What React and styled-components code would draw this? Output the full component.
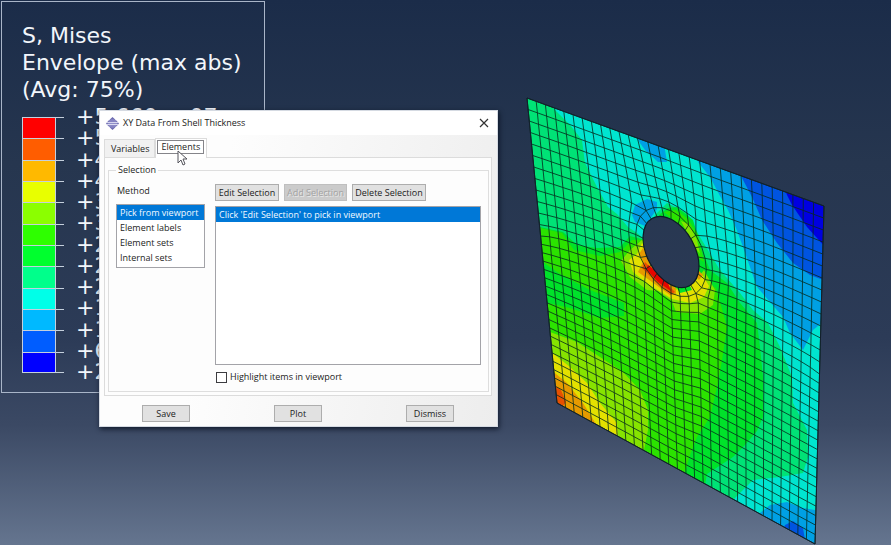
import React, { useState } from 'react';
import styled, { createGlobalStyle } from 'styled-components';

const GlobalStyle = createGlobalStyle`
  * {
    box-sizing: border-box;
  }

  body {
    margin: 0;
    font-family: 'Open Sans', 'Noto Sans', sans-serif;
  }
`;

const Viewport = styled.main`
  position: relative;
  display: flex;
  justify-content: space-between;
  min-height: 100vh;
  padding-right: 61px;
  overflow: hidden;
  background: linear-gradient(#1b2c49 0%, #26364f 30%, #2c3b57 62%, #3b4964 78%, #65758f 100%);
`;

const LegendBox = styled.section`
  align-self: flex-start;
  width: 264px;
  margin: 1px 0 0 1px;
  padding: 20px 20px 19px;
  border: 1px solid #a9b5c8;
  color: #f2f6fb;
  font-family: 'DejaVu Sans', sans-serif;
  font-size: 22px;
`;

const LegendTitle = styled.h1`
  margin: 0 0 14px;
  font-size: 22px;
  font-weight: 400;
  line-height: 27px;
  white-space: nowrap;
`;

const Scale = styled.div`
  display: flex;
`;

const ColorBar = styled.div`
  display: grid;
  grid-template-rows: repeat(12, 1fr);
  width: 42px;
  height: 256px;
`;

const Swatch = styled.div`
  position: relative;
  border-top: 1px solid #c5d0dd;

  &::before {
    content: '';
    display: block;
    width: 32px;
    height: 100%;
    background: ${({ $color }) => $color};
    border: solid #c5d0dd;
    border-width: 0 1px;
  }

  &:last-child {
    border-bottom: 1px solid #c5d0dd;
  }
`;

const ScaleLabels = styled.ol`
  display: flex;
  flex-direction: column;
  justify-content: space-between;
  height: 275px;
  margin: -10px 0 -9px 12px;
  padding: 0;
  list-style: none;
  line-height: 20px;
`;

const Plot = styled.svg`
  flex: none;
  align-self: flex-end;
  width: 310px;
  height: 455px;
`;

const Dialog = styled.form`
  position: absolute;
  top: 110px;
  left: 99px;
  width: 399px;
  padding: 0 5px 4px 4px;
  border: 1px solid #d5dae2;
  background: linear-gradient(100deg, #fdfdfd 30%, #ededed);
  color: #1c1c22;
  font-size: 9px;
  line-height: 14px;
  box-shadow: 1px 2px 5px rgba(5, 12, 28, 0.8);
`;

const TitleBar = styled.header`
  display: flex;
  align-items: center;
  gap: 4px;
  height: 24px;
  margin: 0 -5px 0 -4px;
  padding: 0 6px 0 6px;
  background: #fff;
`;

const Title = styled.h2`
  flex: 1;
  margin: 0;
  font-size: 9px;
  font-weight: 400;
`;

const CloseButton = styled.button`
  display: flex;
  padding: 2px;
  border: 0;
  background: none;
`;

const Tabs = styled.div`
  display: flex;
  align-items: flex-end;
  padding-top: 3px;
`;

const Tab = styled.button`
  height: ${({ $active }) => ($active ? 20 : 18)}px;
  margin-bottom: ${({ $active }) => ($active ? -1 : 0)}px;
  padding: ${({ $active }) => ($active ? '0 2px 3px 1px' : '1px 1px 1px 2px')};
  border: 1px solid #dcdcdc;
  border-bottom: 0;
  background: ${({ $active }) => ($active ? '#fff' : '#f1f1f1')};
  color: inherit;
  font: inherit;

  span {
    display: block;
    padding: 0 3px;
    border: 1px solid ${({ $active }) => ($active ? '#85858a' : 'transparent')};
    line-height: 12px;
  }
`;

const Panel = styled.div`
  padding: 5px 2px 3px 3px;
  border: 1px solid #dcdcdc;
  background: #fdfdfd;
`;

const Group = styled.fieldset`
  display: flex;
  gap: 10px;
  min-width: 0;
  margin: 0;
  padding: 4px 7px 7px;
  border: 1px solid #dedede;

  legend {
    padding: 0 2px;
  }
`;

const Column = styled.div`
  flex: ${({ $grow }) => ($grow ? '1' : '0 0 89px')};
  min-width: 0;
`;

const MethodLabel = styled.label`
  display: block;
  margin-bottom: 4px;
  padding: 2px 1px 1px;
  line-height: 16px;
`;

const ListBox = styled.select`
  display: block;
  width: 100%;
  height: ${({ $height }) => $height}px;
  padding: 0;
  overflow: hidden;
  border: 1px solid #a3a3a8;
  border-radius: 0;
  outline: 0;
  background: #fff;
  font: 9px/14px 'Open Sans', 'Noto Sans', sans-serif;

  option {
    min-height: 0;
    padding: 1px 3px;
    -webkit-text-fill-color: #1c1c22;
  }

  option:checked {
    background: linear-gradient(#0078d7, #0078d7);
    -webkit-text-fill-color: #f2f8ff;
  }
`;

const ButtonRow = styled.div`
  display: flex;
  gap: 5px;
  margin: 3px 0 5px;
`;

const Button = styled.button`
  width: ${({ $width }) => $width}px;
  height: 17px;
  padding: 0;
  border: 1px solid #adadad;
  background: #e1e1e1;
  color: inherit;
  font: inherit;
  white-space: nowrap;

  &:disabled {
    border-color: #bfbfbf;
    background: #cbcbcb;
    color: #a3a3a3;
    text-shadow: 1px 1px 0 #e9e9e9;
  }
`;

const CheckLabel = styled.label`
  display: flex;
  align-items: center;
  gap: 3px;
  margin-top: 5px;
  padding-left: 1px;
`;

const Checkbox = styled.input`
  appearance: none;
  width: 11px;
  height: 11px;
  margin: 0;
  border: 1px solid #3c3c40;
  background: #fff;

  &:checked {
    background: #0078d7;
  }
`;

const Footer = styled.footer`
  display: flex;
  justify-content: space-between;
  padding: 9px 38px 0;
`;

const Pointer = styled.svg`
  position: absolute;
  top: 150px;
  left: 177px;
  width: 12px;
  height: 17px;
`;

const legendColors = [
  '#ff0000', '#ff5d00', '#ffb900', '#e8ff00', '#8bff00', '#2eff00',
  '#00ff2e', '#00ff8b', '#00ffe8', '#00b9ff', '#005dff', '#0000ff',
];

const legendValues = [
  '+5.660e+07', '+5.205e+07', '+4.750e+07', '+4.294e+07', '+3.839e+07',
  '+3.384e+07', '+2.929e+07', '+2.474e+07', '+2.019e+07', '+1.563e+07',
  '+1.108e+07', '+6.531e+06', '+2.000e+06',
];

const methods = ['Pick from viewport', 'Element labels', 'Element sets', 'Internal sets'];

// Plate corners and the hole, in viewport units
const OUTLINE = '527,98 824,206 815,544 557,403';
const COLS = 30;
const ROWS = 32;
const RING = { left: 11, right: 17, top: 6, bottom: 12 };
const SEAM = 14;

const lerp = (a, b, t) => a + (b - a) * t;

const holePoint = (a, b, scale) => [
  671 + 28 * a * scale,
  252 + (13.9 * a + 32.7 * b) * scale,
];

// maps the square block of elements round the hole onto the ellipse
const ringPoint = (i, j, scale) => {
  const p = (i - SEAM) / 3;
  const q = (j - 9) / 3;
  if (Math.abs(p) >= Math.abs(q)) {
    const t = (q / Math.abs(p)) * Math.PI / 4;
    return holePoint(Math.sign(p) * Math.cos(t), Math.sin(t), scale);
  }
  const t = (p / Math.abs(q)) * Math.PI / 4;
  return holePoint(Math.sin(t), Math.sign(q) * Math.cos(t), scale);
};

const inHole = (i, j) => i > RING.left && i < RING.right && j > RING.top && j < RING.bottom;
const onRing = (i, j) =>
  i >= RING.left && i <= RING.right && j >= RING.top && j <= RING.bottom && !inHole(i, j);

// x runs a bit denser on the left of the top edge, y denser on the lower left
const topX = (i) => (i <= 12 ? 527 + i * 9.2 : 637.4 + ((i - 12) * 186.6) / 18);
const leftY = (j) => (j <= 12 ? 98 + j * 11.5 : 236 + (j - 12) * 8.35);
const rightY = (j) => (j <= 14 ? 206 + j * 12 : 374 + ((j - 14) * 170) / 18);

const buildMesh = () => {
  const nodes = [];
  const fixed = [];
  for (let j = 0; j <= ROWS; j++) {
    nodes.push([]);
    fixed.push([]);
    for (let i = 0; i <= COLS; i++) {
      const u = i / COLS;
      const tx = topX(i);
      const ty = lerp(98, 206, (tx - 527) / 297);
      const v = lerp((leftY(j) - 98) / 305, (rightY(j) - 206) / 338, u);
      let point = [lerp(tx, lerp(557, 815, u), v), lerp(ty, lerp(403, 544, u), v)];
      let lock = i === 0 || j === 0 || i === COLS || j === ROWS;
      const t = (j - RING.bottom) / (ROWS - RING.bottom);
      if (onRing(i, j)) {
        point = ringPoint(i, j, 1.26);
        lock = true;
      } else if (i === SEAM && t > 0) {
        point = [lerp(671, 677.4, t), lerp(293.2, 468.8, t)];
        lock = true;
      } else if (i === RING.right && t > 0) {
        point = [lerp(698, 703.2, t), lerp(293.5, 482.9, t)];
        lock = true;
      }
      nodes[j].push(point);
      fixed[j].push(lock);
    }
  }
  for (let n = 0; n < 400; n++) {
    for (let j = 1; j < ROWS; j++) {
      for (let i = 1; i < COLS; i++) {
        if (fixed[j][i] || inHole(i, j)) continue;
        nodes[j][i] = [0, 1].map(
          (k) => (nodes[j - 1][i][k] + nodes[j + 1][i][k] + nodes[j][i - 1][k] + nodes[j][i + 1][k]) / 4
        );
      }
    }
  }
  return nodes;
};

const meshPath = () => {
  const nodes = buildMesh();
  const parts = [];
  const segment = (a, b) =>
    parts.push(`M${a[0].toFixed(1)} ${a[1].toFixed(1)}L${b[0].toFixed(1)} ${b[1].toFixed(1)}`);
  for (let j = 0; j <= ROWS; j++) {
    for (let i = 0; i <= COLS; i++) {
      if (inHole(i, j)) continue;
      if (i < COLS && !inHole(i + 1, j)) segment(nodes[j][i], nodes[j][i + 1]);
      if (j < ROWS && !inHole(i, j + 1)) segment(nodes[j][i], nodes[j + 1][i]);
      if (onRing(i, j)) segment(nodes[j][i], ringPoint(i, j, 1));
    }
  }
  return parts.join('');
};

const MESH = meshPath();

const bands = [
  // cyan
  ['#00e5d0', '553,100 553,108 570,125 582,140 585,163 597,187 608,207 617,214 628,227 637,233 645,240 655,215 667,203 687,213 700,237 712,257 720,270 740,293 753,310 768,323 780,347 792,377 793,403 807,430 808,457 803,473 780,477 753,480 733,500 733,550 830,550 830,190'],
  // light blue
  ['#00a0e4', '697,155 698,162 710,177 720,196 728,210 736,228 743,247 757,287 770,302 783,317 790,333 803,350 813,330 823,322 830,200'],
  ['#00a0e4', '637,130 637,139 645,150 658,162 667,162 665,150 662,140'],
  ['#00a0e4', '632,215 635,205 647,199 657,202 657,209 645,226 635,222'],
  ['#00a0e4', '758,520 760,513 770,505 787,502 803,508 815,510 820,548'],
  // blue
  ['#0054e0', '740,170 742,178 752,197 762,220 777,243 793,263 810,275 826,281 830,200'],
  ['#0054e0', '783,530 785,525 793,521 803,528 805,540'],
  ['#0000e0', '783,185 787,195 792,205 807,227 826,248 830,200'],
  // greens
  ['#00e22a', '540,227 563,232 577,245 597,248 620,247 630,236 645,240 660,214 668,208 677,207 693,220 702,250 710,270 727,283 740,303 757,323 760,347 763,377 763,417 757,431 745,445 733,457 707,474 704,490 550,420'],
  ['#2be300', '540,228 562,233 574,250 600,256 620,252 632,240 646,240 672,293 700,280 716,288 727,327 722,360 718,383 710,417 697,437 690,455 684,475 550,430 548,303 570,308 600,318 624,316 624,303 590,290 560,274 540,260'],
  ['#2be300', '664,212 676,210 688,219 698,235 704,262 698,258 686,230'],
  // yellow green
  ['#86e300', '550,332 577,342 600,357 623,372 640,390 648,410 648,430 643,455 550,420'],
  ['#86e300', '642,240 630,250 621,261 630,277 647,290 658,291 672,301 676,312 700,314 713,305 715,290 704,270 690,288 670,288'],
  ['#86e300', '681,221 689,224 697,240 700,254 694,246'],
  // yellow
  ['#e3e000', '550,351 570,367 587,383 600,403 617,423 618,440 550,420'],
  ['#e3e000', '642,243 637,254 629,260 633,272 648,284 672,299 690,303 704,297 709,286 703,276 697,270 690,286 675,290'],
  ['#00e22a', '675,285 689,284 692,290 680,293'],
  // orange and red
  ['#e69a00', '550,369 567,383 583,403 596,424 550,420'],
  ['#e69a00', '643,248 639,254 643,262 638,272 652,282 670,295 676,295 676,288 660,275'],
  ['#e69a00', '699,271 703,275 699,280 695,276'],
  ['#e65000', '550,382 561,390 566,402 560,410 550,405'],
  ['#e65000', '645,262 642,268 655,281 671,294 675,292'],
  ['#e60500', '648,265 646,269 658,282 671,291 668,283 655,270'],
];

const StressPlot = () => (
  <Plot viewBox="520 90 310 455" role="img" aria-label="Mises stress contour on plate with hole">
    <defs>
      <mask id="plate">
        <polygon points={OUTLINE} fill="#fff" />
        <ellipse cx="671" cy="252" rx="23.8" ry="38.5" transform="rotate(-29 671 252)" fill="#000" />
      </mask>
    </defs>
    <g mask="url(#plate)">
      <polygon points={OUTLINE} fill="#00e276" />
      {bands.map(([color, points]) => (
        <polygon key={points} points={points} fill={color} />
      ))}
    </g>
    <path d={MESH} fill="none" stroke="#062a1c" strokeWidth="0.9" strokeOpacity="0.9" />
    <polygon points={OUTLINE} fill="none" stroke="#14202c" strokeWidth="1" />
    <ellipse
      cx="671"
      cy="252"
      rx="23.8"
      ry="38.5"
      transform="rotate(-29 671 252)"
      fill="none"
      stroke="#0c1a24"
      strokeWidth="1.2"
    />
  </Plot>
);

const ContourLegend = () => (
  <LegendBox>
    <LegendTitle>
      S, Mises<br />
      Envelope (max abs)<br />
      (Avg: 75%)
    </LegendTitle>
    <Scale>
      <ColorBar>
        {legendColors.map(color => (
          <Swatch key={color} $color={color} />
        ))}
      </ColorBar>
      <ScaleLabels>
        {legendValues.map(value => (
          <li key={value}>{value}</li>
        ))}
      </ScaleLabels>
    </Scale>
  </LegendBox>
);

const AppIcon = () => (
  <svg width="13" height="13" viewBox="0 0 12 12" aria-hidden="true">
    <path d="M3.5 2.2 6 0l2.5 2.2v1.3h1.3L12 6 9.800 8.500H8.500v1.300L6 12 3.500 9.800V8.500H2.200L0 6l2.200-2.500h1.300z" fill="#6d6bb0" />
    <circle cx="6" cy="6" r="4.200" fill="#8583c2" />
    <path d="M1 5.200h10M1 7h10" stroke="#e4e4f6" strokeWidth="0.9" />
  </svg>
);

const App = () => {
  const [tab, setTab] = useState('Elements');
  const [method, setMethod] = useState(methods[0]);
  const [highlight, setHighlight] = useState(false);

  return (
    <>
      <GlobalStyle />
      <Viewport>
        <ContourLegend />
        <StressPlot />
        <Dialog onSubmit={(e) => e.preventDefault()}>
          <TitleBar>
            <AppIcon />
            <Title>XY Data From Shell Thickness</Title>
            <CloseButton type="button" aria-label="Close">
              <svg width="10" height="10" viewBox="0 0 10 10">
                <path d="M1 1l8 8M9 1l-8 8" stroke="#333" strokeWidth="1.2" />
              </svg>
            </CloseButton>
          </TitleBar>
          <Tabs role="tablist">
            {['Variables', 'Elements'].map(name => (
              <Tab
                key={name}
                type="button"
                role="tab"
                aria-selected={tab === name}
                $active={tab === name}
                onClick={() => setTab(name)}
              >
                <span>{name}</span>
              </Tab>
            ))}
          </Tabs>
          <Panel>
            <Group>
              <legend>Selection</legend>
              <Column>
                <MethodLabel htmlFor="method">Method</MethodLabel>
                <ListBox
                  id="method"
                  size={4}
                  $height={64}
                  value={method}
                  onChange={(e) => setMethod(e.target.value)}
                >
                  {methods.map(name => (
                    <option key={name} value={name}>{name}</option>
                  ))}
                </ListBox>
              </Column>
              <Column $grow>
                <ButtonRow>
                  <Button type="button" $width={64}>Edit Selection</Button>
                  <Button type="button" $width={63} disabled>Add Selection</Button>
                  <Button type="button" $width={74}>Delete Selection</Button>
                </ButtonRow>
                <ListBox size={10} $height={159} defaultValue="hint" aria-label="Selected items">
                  <option value="hint">Click 'Edit Selection' to pick in viewport</option>
                </ListBox>
                <CheckLabel>
                  <Checkbox
                    type="checkbox"
                    checked={highlight}
                    onChange={(e) => setHighlight(e.target.checked)}
                  />
                  Highlight items in viewport
                </CheckLabel>
              </Column>
            </Group>
          </Panel>
          <Footer>
            <Button type="submit" $width={48}>Save</Button>
            <Button type="button" $width={48}>Plot</Button>
            <Button type="button" $width={48}>Dismiss</Button>
          </Footer>
        </Dialog>
        <Pointer viewBox="0 0 12 17" aria-hidden="true">
          <path d="M1 1v12l3-3 2 5 2-1-2-5h4z" fill="#fff" stroke="#55555c" />
        </Pointer>
      </Viewport>
    </>
  );
};

export default App;
